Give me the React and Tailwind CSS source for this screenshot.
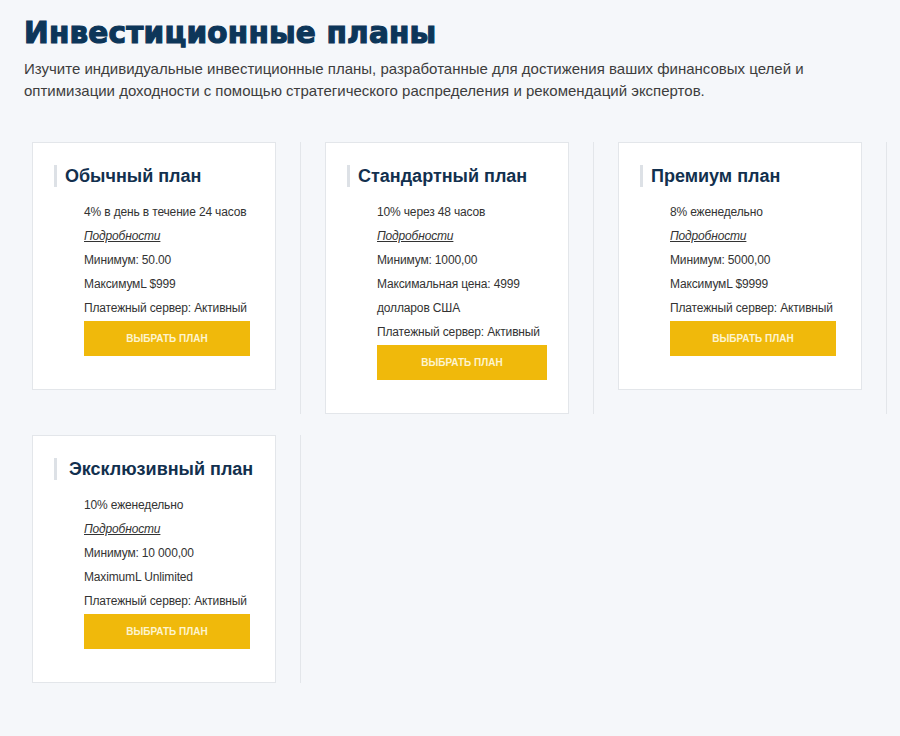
import React from "react";

const plans = [
  {
    title: "Обычный план",
    items: ["4% в день в течение 24 часов", "Минимум: 50.00", "МаксимумL $999", "Платежный сервер: Активный"],
  },
  {
    title: "Стандартный план",
    items: ["10% через 48 часов", "Минимум: 1000,00", "Максимальная цена: 4999 долларов США", "Платежный сервер: Активный"],
    wrap: true,
  },
  {
    title: "Премиум план",
    items: ["8% еженедельно", "Минимум: 5000,00", "МаксимумL $9999", "Платежный сервер: Активный"],
  },
  {
    title: "Эксклюзивный план",
    items: ["10% еженедельно", "Минимум: 10 000,00", "MaximumL Unlimited", "Платежный сервер: Активный"],
    wide: true,
  },
];

function PlanCard({ plan }) {
  const [first, ...rest] = plan.items;
  return (
    <div className="w-[244px] bg-white border border-[#e3e6ea] pt-[22px] pb-[33px]">
      <h3
        className={
          "ml-[21px] border-l-[3px] border-[#dde1e6] text-[18px] leading-[22px] font-bold text-[#12304e] " +
          (plan.wide ? "pl-[12px]" : "pl-[8px]")
        }
      >
        {plan.title}
      </h3>
      <div
        className={
          "ml-[51px] mt-[13px] text-[12px] leading-[24px] tracking-[-0.15px] text-[#333] " +
          (plan.wrap ? "w-[170px]" : "w-[166px] whitespace-nowrap")
        }
      >
        <ul>
          <li>{first}</li>
          <li>
            <a href="#" className="italic underline text-[#333]">Подробности</a>
          </li>
          {rest.map((t) => (
            <li key={t} className={t.startsWith("Платежный") ? "whitespace-nowrap" : ""}>{t}</li>
          ))}
        </ul>
        <button className="mt-px w-full h-[35px] bg-[#f0b90b] text-[#fdf4cf] text-[10px] font-bold uppercase tracking-normal">
          Выбрать план
        </button>
      </div>
    </div>
  );
}

export default function App() {
  return (
    <div className="min-h-screen bg-[#f5f7fa] pb-10" style={{ fontFamily: '"Liberation Sans", Arial, sans-serif' }}>
      <div className="px-6 pt-[14px]">
        <h1
          className="text-[29.5px] leading-[38px] font-bold text-[#0d3659] tracking-[0.2px] [-webkit-text-stroke:1.2px_#0d3659]"
          style={{ fontFamily: '"DejaVu Sans", sans-serif' }}
        >
          Инвестиционные планы
        </h1>
        <p className="mt-[6px] max-w-[800px] text-[15px] leading-[22px] text-[#3d3d3d]">
          Изучите индивидуальные инвестиционные планы, разработанные для достижения ваших финансовых целей и
          оптимизации доходности с помощью стратегического распределения и рекомендаций экспертов.
        </p>
      </div>

      <div className="ml-2 mt-[40px] flex flex-wrap w-[880px] gap-y-[21px]">
        {plans.map((p) => (
          <div key={p.title} className="w-[293px] px-6 border-r border-[#e3e6ea]">
            <PlanCard plan={p} />
          </div>
        ))}
      </div>
    </div>
  );
}
